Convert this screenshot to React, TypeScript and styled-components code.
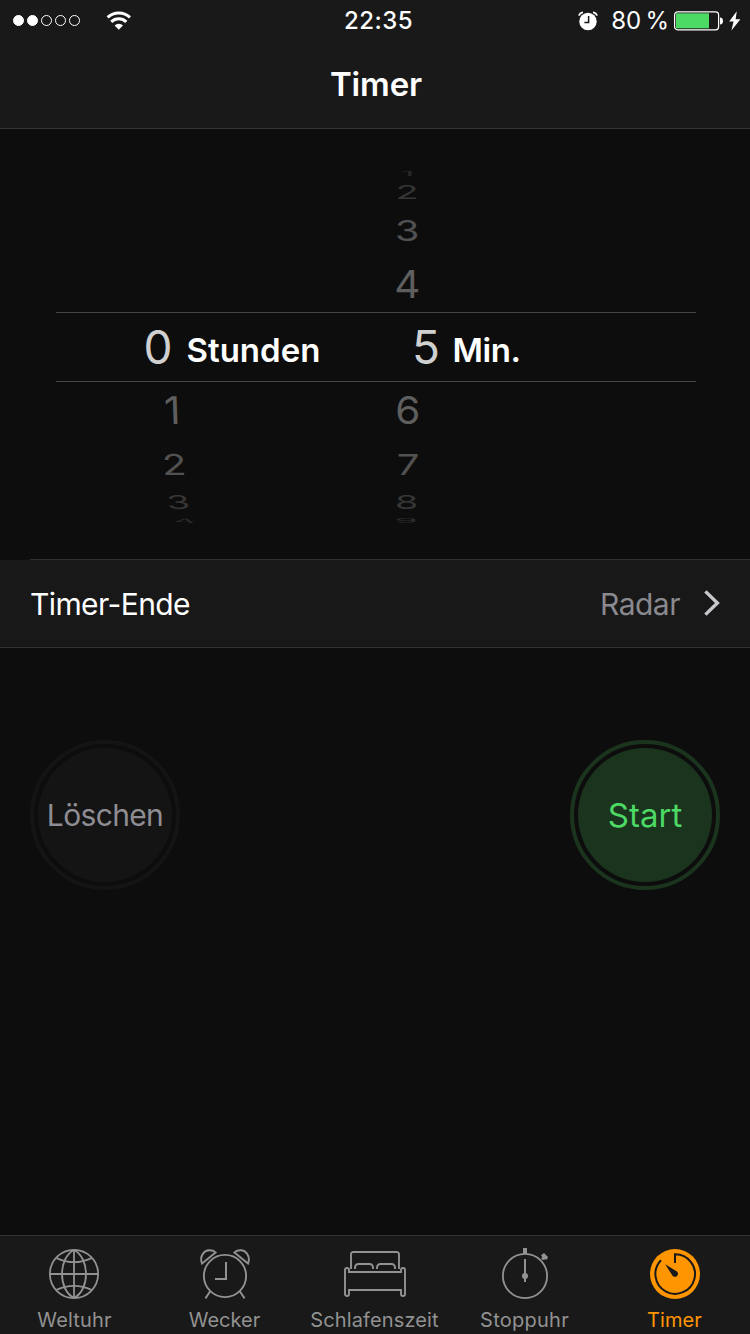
import React from 'react';
import styled, { createGlobalStyle } from 'styled-components';

const GlobalStyle = createGlobalStyle`
  * { box-sizing: border-box; }
  body {
    margin: 0;
    background: #0d0d0d;
    font-family: Inter, "Liberation Sans", sans-serif;
    color: #fff;
  }
`;

const Screen = styled.main`
  width: 750px;
  height: 1334px;
  display: flex;
  flex-direction: column;
  background: #0d0d0d;
  overflow: hidden;
`;

const Header = styled.header`
  height: 129px;
  flex: none;
  background: #191919;
  border-bottom: 1px solid #333;
`;

const StatusBar = styled.div`
  height: 41px;
  display: grid;
  grid-template-columns: 1fr auto 1fr;
  align-items: center;
  padding: 0 9px 0 13px;
`;

const StatusGroup = styled.div<{ $end?: boolean }>`
  display: flex;
  align-items: center;
  justify-content: ${(p) => (p.$end ? 'flex-end' : 'flex-start')};
`;

const Signal = styled.div`
  display: flex;
  gap: 3px;
  margin-right: 26px;
`;

const Dot = styled.span<{ $on: boolean }>`
  width: 11px;
  height: 11px;
  border-radius: 50%;
  border: 1px solid #fff;
  background: ${(p) => (p.$on ? '#fff' : 'transparent')};
`;

const Clock = styled.time`
  font-size: 24px;
  line-height: 40px;
  font-weight: 500;
  letter-spacing: 0.45px;
  margin-left: 3px;
`;

const Percent = styled.span`
  font-size: 24px;
  line-height: 40px;
  letter-spacing: 0;
  word-spacing: -2.5px;
  margin: 0 5px 0 13px;
`;

const Title = styled.h1`
  margin: 0;
  padding-left: 2px;
  font-size: 33px;
  line-height: 87px;
  font-weight: 600;
  text-align: center;
  letter-spacing: -0.1px;
`;

const Picker = styled.section`
  height: 430px;
  flex: none;
  padding: 38px 54px 0 56px;
`;

const PickerRow = styled.div<{ $height: number }>`
  display: grid;
  grid-template-columns: 236px 231px;
  height: ${(p) => p.$height}px;
`;

const SelectedRow = styled(PickerRow)`
  border-top: 1px solid #444;
  border-bottom: 1px solid #444;
`;

const Cell = styled.div`
  display: flex;
  align-items: center;
  justify-content: center;
`;

const SelectedCell = styled.div<{ $indent: number }>`
  display: flex;
  align-items: center;
  padding-left: ${(p) => p.$indent}px;
`;

const Digit = styled.span<{ $sx: number; $sy: number; $tone: string; $shift: number; $skew: number }>`
  font-size: 46px;
  line-height: 0;
  font-weight: 400;
  color: ${(p) => p.$tone};
  transform: translateX(${(p) => p.$shift}px) skewX(${(p) => p.$skew}deg)
    scale(${(p) => p.$sx}, ${(p) => p.$sy});
`;

const Value = styled.span`
  width: 32px;
  font-size: 46px;
  line-height: 64px;
  font-weight: 400;
  text-align: center;
  color: #d0d0d0;
`;

const Unit = styled.span<{ $gap: number; $spacing: number }>`
  margin: 6px 0 0 ${(p) => p.$gap}px;
  font-size: 33px;
  line-height: 60px;
  font-weight: 600;
  letter-spacing: ${(p) => p.$spacing}px;
`;

const SoundRow = styled.div`
  height: 89px;
  flex: none;
  display: flex;
  align-items: center;
  padding: 1px 30px 0 30px;
  font-size: 30px;
  background:
    linear-gradient(#323232, #323232) 30px 0 / 100% 1px no-repeat,
    linear-gradient(#181818, #181818) 0 1px / 100% 100% no-repeat;
  border-bottom: 1px solid #323232;
`;

const SoundLabel = styled.span`
  flex: 1;
  letter-spacing: -0.6px;
`;

const SoundName = styled.span`
  color: #8a898f;
  letter-spacing: -0.5px;
  margin-right: 24px;
`;

const Actions = styled.section`
  flex: 1;
  display: flex;
  justify-content: space-between;
  align-items: flex-start;
  padding: 92px 30px 0;
`;

const RoundButton = styled.button<{ $fill: string; $color: string; $size: number; $spacing: number }>`
  width: 150px;
  height: 150px;
  padding: 4px;
  border: 4px solid ${(p) => p.$fill};
  border-radius: 50%;
  background: transparent;
  color: ${(p) => p.$color};
  font: 400 ${(p) => p.$size}px Inter, "Liberation Sans", sans-serif;
  letter-spacing: ${(p) => p.$spacing}px;
`;

const ButtonFace = styled.span<{ $fill: string }>`
  display: flex;
  align-items: center;
  justify-content: center;
  width: 134px;
  height: 134px;
  border-radius: 50%;
  background: ${(p) => p.$fill};
`;

const TabBar = styled.nav`
  height: 99px;
  flex: none;
  display: grid;
  grid-template-columns: repeat(5, 150px);
  background: #191919;
  border-top: 1px solid #333;
`;

const Tab = styled.a<{ $active?: boolean }>`
  display: flex;
  flex-direction: column;
  align-items: center;
  padding-top: 10px;
  color: ${(p) => (p.$active ? '#ff9500' : '#929292')};
`;

const TabIcon = styled.span<{ $nudge?: number }>`
  display: flex;
  margin-right: ${(p) => p.$nudge ?? 0}px;
`;

const TabLabel = styled.span<{ $spacing: number }>`
  margin: 8px 1px 0 0;
  font-size: 20px;
  line-height: 24px;
  letter-spacing: ${(p) => p.$spacing}px;
  white-space: nowrap;
`;

const WifiIcon = () => (
  <svg width="26" height="20" viewBox="0 0 26 20" fill="none" stroke="#fff" strokeWidth="3">
    <path d="M1.6 6.4 A16.6 16.6 0 0 1 24 6.4" />
    <path d="M5.3 10.9 A10.8 10.8 0 0 1 20.3 10.9" />
    <path d="M8.6 14.4 A6 6 0 0 1 17 14.4 L12.8 18.7 Z" fill="#fff" stroke="none" />
  </svg>
);

const AlarmIcon = () => (
  <svg width="20" height="20" viewBox="0 0 20 20" fill="none">
    <circle cx="10" cy="10.5" r="8.7" fill="#fff" />
    <path d="M1 4.6 Q1.7 1.7 5 1.3M19 4.6 Q18.3 1.7 15 1.3" stroke="#fff" strokeWidth="1.7" />
    <path d="M10.6 5v6.4H6.4" stroke="#191919" strokeWidth="1.5" />
  </svg>
);

const BatteryIcon = () => (
  <svg width="50" height="20" viewBox="0 0 50 20">
    <rect x="0.6" y="0.8" width="44" height="18" rx="3" fill="none" stroke="#fff" strokeWidth="1.2" />
    <rect x="2" y="2.3" width="33" height="15" fill="#4cd964" />
    <path d="M46 6.5 Q49 6.7 49 10 Q49 13.3 46 13.5 Z" fill="#fff" />
  </svg>
);

const Bolt = styled.svg`
  margin-left: 5px;
`;

const BoltIcon = () => (
  <Bolt width="12" height="20" viewBox="0 0 12 20">
    <path d="M7.8 0.2 L0.2 10.6 H4.6 L2.4 19.4 L11.4 8.2 H6.6 Z" fill="#fff" />
  </Bolt>
);

const ChevronSvg = styled.svg`
  margin-bottom: 2px;
`;

const Chevron = () => (
  <ChevronSvg width="16" height="28" viewBox="0 0 16 28" fill="none" stroke="#c7c7cc" strokeWidth="3.4">
    <path d="M1.4 2.4 L13.4 14 L1.4 25.6" />
  </ChevronSvg>
);

const GlobeIcon = () => (
  <svg width="50" height="54" viewBox="0 0 50 54" fill="none" stroke="currentColor" strokeWidth="1.8">
    <circle cx="25" cy="28" r="24.1" />
    <path d="M25 4v48M1 28h48" />
    <path d="M25 4C9 12 9 44 25 52M25 4C41 12 41 44 25 52" />
    <path d="M7.5 12.1 Q25 20.2 42.5 12.1M7.5 43.9 Q25 35.8 42.5 43.9" />
  </svg>
);

const WeckerIcon = () => (
  <svg width="52" height="54" viewBox="0 0 52 54" fill="none" stroke="currentColor" strokeWidth="1.9">
    <circle cx="27" cy="30" r="21.1" />
    <path d="M28 16v17H17" strokeWidth="2" />
    <path d="M4 17.6 L17.6 6.4 C14 3.2 8 3.4 5 7.6 C2.6 11 2.7 14.4 4 17.6Z" />
    <path d="M50 17.6 L36.4 6.4 C40 3.2 46 3.4 49 7.6 C51.4 11 51.3 14.4 50 17.6Z" />
    <path d="M12.4 45 L7.4 52.4M41.6 45 L46.6 52.4" />
  </svg>
);

const BedIcon = () => (
  <svg width="62" height="54" viewBox="0 0 62 54" fill="none" stroke="currentColor" strokeWidth="1.9">
    <path d="M7 23V8.2a2.2 2.2 0 0 1 2.2-2.2h43.6A2.2 2.2 0 0 1 55 8.2V23" />
    <path d="M11 23v-1.6a3.4 3.4 0 0 1 3.4-3.4h11.2a3.4 3.4 0 0 1 3.4 3.4V23M33 23v-1.6a3.4 3.4 0 0 1 3.4-3.4h11.2a3.4 3.4 0 0 1 3.4 3.4V23" />
    <path d="M5 26h52v-2a2 2 0 0 1 4 0v24a2 2 0 0 1-4 0v-4H5v4a2 2 0 0 1-4 0V24a2 2 0 0 1 4 0Z" />
  </svg>
);

const StopwatchIcon = () => (
  <svg width="48" height="54" viewBox="0 0 48 54" fill="none" stroke="currentColor" strokeWidth="1.8">
    <circle cx="24" cy="30" r="22.1" />
    <path d="M24 2v6" strokeWidth="4" />
    <path d="M24 13v23" strokeWidth="2" />
    <circle cx="24" cy="30" r="3" fill="currentColor" stroke="none" />
    <path d="M40 9.2 L43 7 L47 11 L46 13.4 L43.6 13.6 L41.4 14 L40.2 12.4 L41.2 11Z" fill="currentColor" stroke="none" />
  </svg>
);

const TimerIcon = () => (
  <svg width="50" height="54" viewBox="0 0 50 54" fill="none">
    <circle cx="25" cy="28" r="25" fill="currentColor" />
    <path d="M25 17V8.2A19.8 19.8 0 1 1 11 14.2" stroke="#191919" strokeWidth="2" />
    <path d="M15.2 18.2 L26.9 25.4 A3.1 3.1 0 1 1 22.4 29.6 Z" fill="#191919" />
  </svg>
);

interface WheelDigit {
  text: string;
  shift?: number;
  skew?: number;
}

interface WheelRow {
  height: number;
  sx: number;
  sy: number;
  tone: string;
  hours?: WheelDigit;
  minutes: WheelDigit;
}

const rowsAbove: WheelRow[] = [
  { height: 13, sx: 0.8, sy: 0.13, tone: '#262626', minutes: { text: '1' } },
  { height: 24, sx: 0.82, sy: 0.41, tone: '#363636', minutes: { text: '2' } },
  { height: 52, sx: 0.86, sy: 0.63, tone: '#515151', minutes: { text: '3' } },
  { height: 56, sx: 0.88, sy: 0.83, tone: '#5e5e5e', minutes: { text: '4', shift: -0.5 } },
];

const rowsBelow: WheelRow[] = [
  { height: 56, sx: 0.88, sy: 0.83, tone: '#5e5e5e', hours: { text: '1', shift: -2, skew: 2 }, minutes: { text: '6', shift: 0.5 } },
  { height: 52, sx: 0.87, sy: 0.63, tone: '#515151', hours: { text: '2', skew: 3 }, minutes: { text: '7', shift: 1 } },
  { height: 24, sx: 0.82, sy: 0.41, tone: '#363636', hours: { text: '3', shift: 4, skew: 8 }, minutes: { text: '8', shift: -0.5 } },
  { height: 13, sx: 0.8, sy: 0.13, tone: '#2a2a2a', hours: { text: '4', shift: 10.5, skew: 50 }, minutes: { text: '9', shift: -1 } },
];

const Row = ({ row }: { row: WheelRow }) => (
  <PickerRow $height={row.height}>
    {[row.hours, row.minutes].map((d, i) => (
      <Cell key={i}>
        {d && (
          <Digit $sx={row.sx} $sy={row.sy} $tone={row.tone} $shift={d.shift ?? 0} $skew={d.skew ?? 0}>
            {d.text}
          </Digit>
        )}
      </Cell>
    ))}
  </PickerRow>
);

const tabs = [
  { label: 'Weltuhr', icon: <GlobeIcon />, spacing: 0.15, nudge: 2 },
  { label: 'Wecker', icon: <WeckerIcon />, spacing: 0, nudge: 2 },
  { label: 'Schlafenszeit', icon: <BedIcon />, spacing: 0.12 },
  { label: 'Stoppuhr', icon: <StopwatchIcon />, spacing: 0.25 },
  { label: 'Timer', icon: <TimerIcon />, spacing: 0.1, active: true },
];

export default function App() {
  return (
    <Screen>
      <GlobalStyle />
      <Header>
        <StatusBar>
          <StatusGroup>
            <Signal>
              {[true, true, false, false, false].map((on, i) => (
                <Dot key={i} $on={on} />
              ))}
            </Signal>
            <WifiIcon />
          </StatusGroup>
          <Clock>22:35</Clock>
          <StatusGroup $end>
            <AlarmIcon />
            <Percent>80 %</Percent>
            <BatteryIcon />
            <BoltIcon />
          </StatusGroup>
        </StatusBar>
        <Title>Timer</Title>
      </Header>

      <Picker>
        {rowsAbove.map((row) => (
          <Row key={row.minutes.text} row={row} />
        ))}
        <SelectedRow $height={70}>
          <SelectedCell $indent={87.5}>
            <Value>0</Value>
            <Unit $gap={14} $spacing={0}>Stunden</Unit>
          </SelectedCell>
          <SelectedCell $indent={118}>
            <Value>5</Value>
            <Unit $gap={10.5} $spacing={-0.4}>Min.</Unit>
          </SelectedCell>
        </SelectedRow>
        {rowsBelow.map((row) => (
          <Row key={row.minutes.text} row={row} />
        ))}
      </Picker>

      <SoundRow>
        <SoundLabel>Timer-Ende</SoundLabel>
        <SoundName>Radar</SoundName>
        <Chevron />
      </SoundRow>

      <Actions>
        <RoundButton $fill="#141414" $color="#8e8d93" $size={30} $spacing={-0.65}>
          <ButtonFace $fill="#141414">Löschen</ButtonFace>
        </RoundButton>
        <RoundButton $fill="#1b341e" $color="#4cd964" $size={33} $spacing={0}>
          <ButtonFace $fill="#1b341e">Start</ButtonFace>
        </RoundButton>
      </Actions>

      <TabBar>
        {tabs.map((tab) => (
          <Tab key={tab.label} $active={tab.active}>
            <TabIcon $nudge={tab.nudge}>{tab.icon}</TabIcon>
            <TabLabel $spacing={tab.spacing}>{tab.label}</TabLabel>
          </Tab>
        ))}
      </TabBar>
    </Screen>
  );
}
